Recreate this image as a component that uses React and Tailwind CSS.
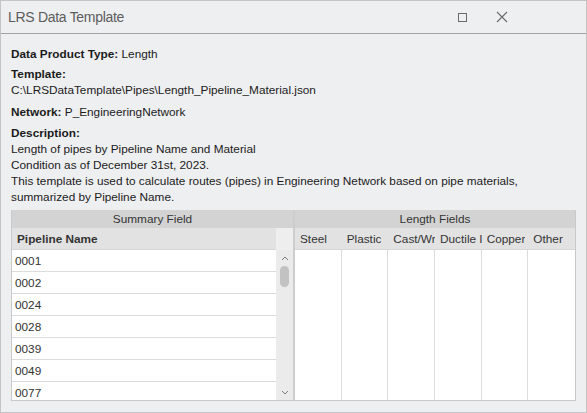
import React from "react";

const rows = ["0001", "0002", "0024", "0028", "0039", "0049", "0077"];
const cols = ["Steel", "Plastic", "Cast/Wrought Iron", "Ductile Iron", "Copper", "Other"];

export default function App() {
  return (
    <div
      className="w-[587px] h-[413px] bg-[#eeeff1] border border-[#c4c4c4] flex flex-col text-[#1b1b1b] overflow-hidden"
      style={{ fontFamily: '"Liberation Sans", Arial, sans-serif' }}
    >
      {/* Title bar */}
      <div className="h-[33px] shrink-0 border-b border-[#a3a3a3] flex items-center pl-[7px]">
        <div className="text-[14px] tracking-[-0.3px] text-[#5c5c5c] flex-1 pt-[1px]">LRS Data Template</div>
        <div className="flex items-center">
          <svg width="10" height="10" viewBox="0 0 10 10" className="mr-[29px]">
            <rect x="1.5" y="1.5" width="8" height="8" fill="none" stroke="#6a6a6a" strokeWidth="1" />
          </svg>
          <svg width="12" height="12" viewBox="0 0 12 12" className="mr-[78px]">
            <path d="M1 1 L11 11 M11 1 L1 11" stroke="#6a6a6a" strokeWidth="1.1" fill="none" />
          </svg>
        </div>
      </div>

      {/* Content */}
      <div className="flex-1 flex flex-col px-[10px] pt-[12px] text-[11.8px] leading-[16px]">
        <div>
          <span className="font-bold">Data Product Type:</span> Length
        </div>
        <div className="mt-[4px]">
          <div className="font-bold">Template:</div>
          <div>C:\LRSDataTemplate\Pipes\Length_Pipeline_Material.json</div>
        </div>
        <div className="mt-[6px]">
          <span className="font-bold">Network:</span> P_EngineeringNetwork
        </div>
        <div className="mt-[5px]">
          <div className="font-bold">Description:</div>
          <div>Length of pipes by Pipeline Name and Material</div>
          <div>Condition as of December 31st, 2023.</div>
          <div>This template is used to calculate routes (pipes) in Engineering Network based on pipe materials,</div>
          <div>summarized by Pipeline Name.</div>
        </div>

        {/* Tables */}
        <div className="mt-[5px] flex h-[191px] w-[565px]">
          {/* Summary table */}
          <div className="w-[282px] flex flex-col border-l border-b border-[#c9c9c9]">
            <div className="h-[18px] bg-[#d3d3d3] flex items-center justify-center text-[#333]">Summary Field</div>
            <div className="flex flex-1 min-h-0">
              <div className="flex-1 flex flex-col min-w-0">
                <div className="h-[22px] shrink-0 bg-[#e2e2e2] border-b border-[#d6d6d6] flex items-center pl-[5px] font-bold text-[#333]">
                  Pipeline Name
                </div>
                <div className="flex-1 bg-white overflow-hidden">
                  {rows.map((r) => (
                    <div key={r} className="h-[22px] border-b border-[#dcdcdc] flex items-center pl-[3px] text-[#333]">
                      {r}
                    </div>
                  ))}
                </div>
              </div>
              <div className="w-[17px] bg-[#ebebeb] flex flex-col items-center">
                <div className="h-[22px] w-full bg-[#eeeeee]" />
                <div className="pt-[6px]">
                  <svg width="8" height="5" viewBox="0 0 8 5">
                    <path d="M1 4 L4 1 L7 4" stroke="#7a7a7a" strokeWidth="1" fill="none" />
                  </svg>
                </div>
                <div className="mt-[5px] w-[9px] h-[21px] rounded-full bg-[#c2c2c2]" />
                <div className="flex-1" />
                <div className="pb-[5px]">
                  <svg width="8" height="5" viewBox="0 0 8 5">
                    <path d="M1 1 L4 4 L7 1" stroke="#7a7a7a" strokeWidth="1" fill="none" />
                  </svg>
                </div>
              </div>
            </div>
          </div>

          {/* Divider */}
          <div className="w-[2px] bg-[#cdcdcd]" />

          {/* Length fields table */}
          <div className="w-[281px] flex flex-col border-r border-b border-[#c9c9c9]">
            <div className="h-[18px] bg-[#d3d3d3] flex items-center justify-center text-[#333]">Length Fields</div>
            <div className="h-[22px] shrink-0 bg-[#e2e2e2] border-b border-[#d6d6d6] grid grid-cols-6">
              {cols.map((c) => (
                <div key={c} className="pl-[5px] flex items-center overflow-hidden whitespace-nowrap text-[#333] min-w-0">
                  <span className="block overflow-hidden">{c}</span>
                </div>
              ))}
            </div>
            <div className="flex-1 bg-white grid grid-cols-6">
              {cols.map((c, i) => (
                <div key={c} className={i < 5 ? "border-r border-[#dcdcdc]" : ""} />
              ))}
            </div>
          </div>
        </div>
      </div>
    </div>
  );
}
